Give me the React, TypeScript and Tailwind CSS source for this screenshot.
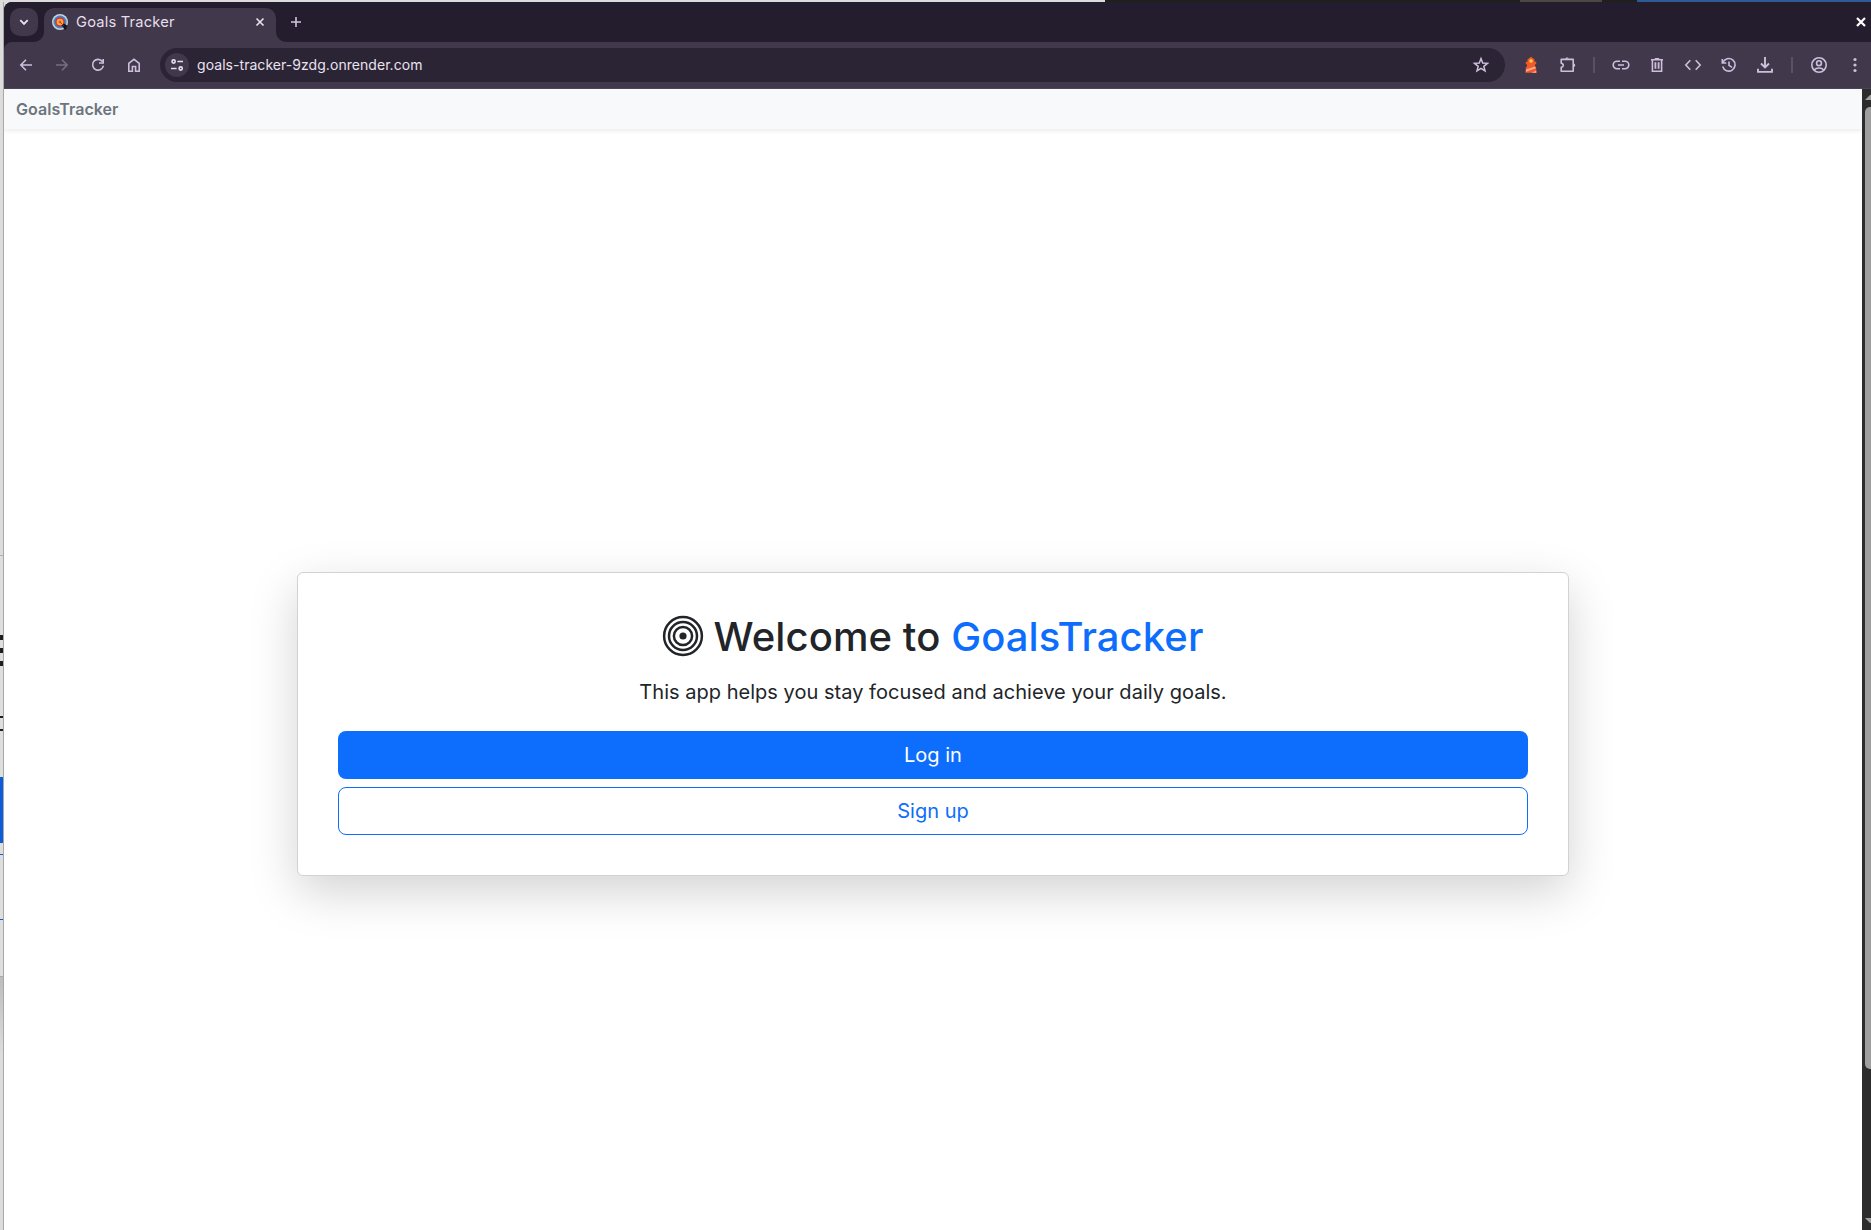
import React from "react";

function Cell({ children, className = "" }: { children: React.ReactNode; className?: string }) {
  return <div className={`flex h-9 w-9 shrink-0 items-center justify-center ${className}`}>{children}</div>;
}

function Icon({ children, size = 18 }: { children: React.ReactNode; size?: number }) {
  return (
    <svg width={size} height={size} viewBox={`0 0 ${size} ${size}`} fill="none" stroke="currentColor" strokeWidth="1.6" className="shrink-0">
      {children}
    </svg>
  );
}

function Separator() {
  return (
    <div className="flex w-[18px] shrink-0 justify-center">
      <div className="h-4 w-[2px] bg-[#5a5067]" />
    </div>
  );
}

function TabStrip() {
  return (
    <div className="flex h-10 shrink-0 items-start bg-[#241d2e] pl-[6px] pt-[6px]">
      <button className="flex h-7 w-7 items-center justify-center rounded-[10px] bg-[#41384c] text-[#e9e0f2]">
        <Icon size={12}><path d="M2.3 4.2 6 7.9l3.7-3.7" strokeWidth="1.9" /></Icon>
      </button>
      <div className="relative ml-[6px] flex h-[34px] w-[232px] items-start rounded-t-[10px] bg-[#41384c] pl-2 pr-2">
        <svg className="absolute -left-[10px] bottom-0" width="10" height="10"><path d="M10 0v10H0A10 10 0 0 0 10 0Z" fill="#41384c" /></svg>
        <svg className="absolute -right-[10px] bottom-0" width="10" height="10"><path d="M0 0v10h10A10 10 0 0 1 0 0Z" fill="#41384c" /></svg>
        <svg className="mt-[6px] shrink-0" width="16" height="16" viewBox="0 0 16 16">
          <circle cx="8" cy="8" r="8" fill="#c3d3dc" />
          <circle cx="8" cy="8" r="6.5" fill="#3b88c3" />
          <circle cx="8" cy="8" r="4.8" fill="#dd2e44" />
          <circle cx="8" cy="8" r="3.3" fill="#ffac33" />
          <circle cx="8" cy="8" r="1.4" fill="#dd5b2e" />
          <path d="M9.6 11.2 12 9.4l4 2.6-1.4.8-.4 2.8-1.6-.2Z" fill="#17131a" />
          <path d="m8 8 3.6 3.6" stroke="#a0452a" strokeWidth=".9" />
        </svg>
        <span className="ml-2 flex-1 whitespace-nowrap text-[14.67px] leading-7 tracking-[0.2px] text-[#e5dfea]">Goals Tracker</span>
        <div className="flex h-7 w-4 items-center justify-center text-[#e5dfea]">
          <Icon size={10}><path d="m1.5 1.5 7 7m0-7-7 7" strokeWidth="1.7" /></Icon>
        </div>
      </div>
      <div className="ml-[6px] flex h-7 w-7 items-center justify-center text-[#cfc4dc]">
        <Icon size={12}><path d="M6 1v10M1 6h10" /></Icon>
      </div>
      <div className="ml-auto flex h-7 w-5 items-center justify-center text-white">
        <Icon size={12}><path d="m2 2 8 8m0-8-8 8" strokeWidth="2.2" /></Icon>
      </div>
    </div>
  );
}

function Toolbar() {
  return (
    <div className="flex h-[47px] shrink-0 items-center rounded-tl-[8px] border-b border-[#4c4456] bg-[#41384c] pl-1 text-[#cdbfdc]">
      <Cell><Icon><path d="M15 9H3.8M9 3.8 3.8 9 9 14.2" /></Icon></Cell>
      <Cell className="text-[#776d82]"><Icon><path d="M3 9h11.2M9 3.8 14.2 9 9 14.2" /></Icon></Cell>
      <Cell><Icon><path d="M13.4 5.5A5.4 5.4 0 1 0 14.4 9.6M14.2 3v4H10" /></Icon></Cell>
      <Cell><Icon><path d="M3.8 7.3 9 3.3l5.2 4v7.9h-3.6v-4.7H7.4v4.7H3.8Z" /></Icon></Cell>
      <div className="ml-2 flex h-[34px] flex-1 items-center rounded-full bg-[#2b2435] pl-[5px] pr-[15px]">
        <div className="flex h-6 w-6 items-center justify-center rounded-full bg-[#41384c] text-[#e5dfea]">
          <Icon size={14}><circle cx="3.6" cy="3.5" r="1.6" /><path d="M7.4 3.5H13M1 10.5h5.6" /><circle cx="10.7" cy="10.5" r="1.6" /></Icon>
        </div>
        <span className="mb-[2px] ml-2 flex-1 whitespace-nowrap text-[14px] tracking-[0.05px] text-[#e9e2ef]">goals-tracker-9zdg.onrender.com</span>
        <Icon><path d="m9 2.6 1.7 4.4 4.8.3-3.7 3 1.2 4.6L9 12.3l-4 2.6 1.2-4.6-3.7-3 4.8-.3Z" strokeWidth="1.5" /></Icon>
      </div>
      <div className="ml-2 flex items-center">
        <Cell>
          <svg width="16" height="18" viewBox="0 0 16 18">
            <path d="M4.5 3.5 8 .8l3.5 2.7v2.3h1.7v2.4h-1.2v2.6h1l.6 6H2.4l.6-6h1V8.2H2.8V5.8h1.7Z" fill="#f4592a" />
            <circle cx="8" cy="5" r="1.8" fill="#ffd53c" />
            <path d="m3.2 13.6 9.1-3.2.3 1.8-9.7 3.5Z" fill="#ffad91" />
            <path d="m8.5 16.8 4.6-2 .3 2Z" fill="#ffad91" />
          </svg>
        </Cell>
        <Cell><Icon><path d="M3.2 3.4h12v11.8h-12v-3.8c2.8-.6 2.8-3.8 0-4.2Z" strokeLinejoin="round" /><path d="M7.2 2.8c.4-1.9 3.2-1.9 3.6 0ZM15.8 7.5c1.9.4 1.9 3.2 0 3.6Z" fill="currentColor" stroke="none" /></Icon></Cell>
        <Separator />
        <Cell><Icon><path d="M8 5.2H5a3.8 3.8 0 0 0 0 7.6h3M10 5.2h3a3.8 3.8 0 0 1 0 7.6h-3M6 9h6" /></Icon></Cell>
        <Cell><Icon><path d="M3 3.7h12M6.8 2.7h4.4M4.4 4v11.3h9.2V4M7.3 6.3v6.5M10.7 6.3v6.5" strokeWidth="1.6" /><path d="M9 6.3v6.5" strokeWidth="1" opacity=".5" /></Icon></Cell>
        <Cell><Icon><path d="M6.3 4.3 1.8 9l4.5 4.7M11.7 4.3 16.2 9l-4.5 4.7" /></Icon></Cell>
        <Cell><Icon><path d="M2.3 3v4h4M2.9 6.5A6.3 6.3 0 1 1 2.7 10.5M9 5.5v3.8l3 2" /></Icon></Cell>
        <Cell><Icon><path d="M9 1v10M5 7.5l4 4 4-4M2 12.7v3.2h14v-3.2" strokeWidth="1.9" /></Icon></Cell>
        <Separator />
        <Cell><Icon><circle cx="9" cy="9" r="7.2" /><circle cx="9" cy="7.2" r="2.4" /><path d="M4 14c2.7-2.7 7.3-2.7 10 0" /></Icon></Cell>
        <Cell className="-mr-[2px]"><Icon><g fill="currentColor" stroke="none"><circle cx="9" cy="3.5" r="1.6" /><circle cx="9" cy="9" r="1.6" /><circle cx="9" cy="14.5" r="1.6" /></g></Icon></Cell>
      </div>
    </div>
  );
}

function WelcomeCard() {
  return (
    <div className="mt-[443px] w-[1272px] rounded-[6px] border border-[#d1d2d3] bg-white p-10 text-center shadow-[0_16px_48px_rgba(0,0,0,0.175)]">
      <h1 className="mb-4 flex h-12 items-center justify-center pr-px text-[40px] font-medium leading-[48px] tracking-[0.09px] text-[#212529]">
        <svg className="mb-[2px] mr-[10px] shrink-0" width="42" height="42" viewBox="0 0 42 42" fill="none" stroke="#212529" strokeWidth="2.5">
          <circle cx="21" cy="21" r="18.9" />
          <circle cx="21" cy="21" r="14" />
          <circle cx="21" cy="21" r="9.1" />
          <circle cx="21" cy="21" r="3.6" fill="#212529" stroke="none" />
        </svg>
        <span>Welcome to <span className="text-[#0d6efd]">GoalsTracker</span></span>
      </h1>
      <p className="mb-6 text-[20px] leading-[30px] tracking-[0.025px] text-[#212529]">This app helps you stay focused and achieve your daily goals.</p>
      <div className="grid gap-2">
        <button className="h-12 rounded-lg bg-[#0d6efd] text-[20px] text-white">Log in</button>
        <button className="h-12 rounded-lg border border-[#0d6efd] text-[20px] text-[#0d6efd]">Sign up</button>
      </div>
    </div>
  );
}

function BackgroundEdge() {
  return (
    <div className="flex w-1 shrink-0 flex-col overflow-hidden border-r border-[#a8a8a8] bg-[#dededd]">
      <div className="h-[554px] border-b border-[#b0b0b0] bg-[#dcdcdc]" />
      <div className="mt-[79px] h-[5px] bg-[#1c1f22]" />
      <div className="mt-2 h-[5px] bg-[#1c1f22]" />
      <div className="mt-2 h-[5px] bg-[#1c1f22]" />
      <div className="mt-[50px] h-[2px] bg-[#1c1f22]" />
      <div className="mt-[11px] h-[2px] bg-[#1c1f22]" />
      <div className="mt-[46px] h-[66px] bg-[#0b5ed7]" />
      <div className="mt-[11px] h-px bg-[#0b5ed7]" />
      <div className="mt-[64px] h-px bg-[#0b5ed7]" />
      <div className="mt-[56px] flex-1 border-t border-[#aaa] bg-gradient-to-b from-[#bdbdbc] via-[#dcdcdc] via-30% to-[#dcdcdc]" />
    </div>
  );
}

function Scrollbar() {
  return (
    <div className="flex w-[9px] shrink-0 flex-col overflow-hidden bg-[#2c2c2c] pl-[3px]">
      <svg className="mt-[6px] shrink-0" width="6" height="5"><path d="M0 5 5 0h1v5Z" fill="#9f9f9f" /></svg>
      <div className="mt-[7px] h-[962px] w-3 shrink-0 rounded-[5px] bg-[#9f9f9f]" />
      <svg className="mt-auto mb-[7px] shrink-0" width="6" height="5"><path d="M0 0h6v5H5Z" fill="#9f9f9f" /></svg>
    </div>
  );
}

export default function App() {
  return (
    <div className="flex h-[1230px] w-[1871px] flex-col overflow-hidden bg-[#dededd] font-['Inter',sans-serif]">
      <div className="flex h-[2px] shrink-0">
        <div className="w-[1105px] bg-[#dcdcdd]" />
        <div className="w-[415px] bg-[#1f1f1d]" />
        <div className="w-[82px] bg-[#4a4744]" />
        <div className="w-[35px] bg-[#1f1f1d]" />
        <div className="flex-1 bg-[#2f5a95]" />
      </div>
      <div className="flex min-h-0 flex-1">
        <BackgroundEdge />
        <div className="flex min-w-0 flex-1 flex-col overflow-hidden rounded-tl-[8px] bg-[#241d2e]">
          <TabStrip />
          <Toolbar />
          <div className="flex min-h-0 flex-1">
            <main className="flex flex-1 flex-col items-center overflow-hidden bg-white">
              <nav className="flex h-10 w-full shrink-0 items-center bg-[#f8f9fa] pl-3 shadow-[0_2px_4px_rgba(0,0,0,0.075)]">
                <span className="text-[16px] font-semibold tracking-[0.06px] text-[#6c757d]">GoalsTracker</span>
              </nav>
              <WelcomeCard />
            </main>
            <Scrollbar />
          </div>
        </div>
      </div>
    </div>
  );
}
